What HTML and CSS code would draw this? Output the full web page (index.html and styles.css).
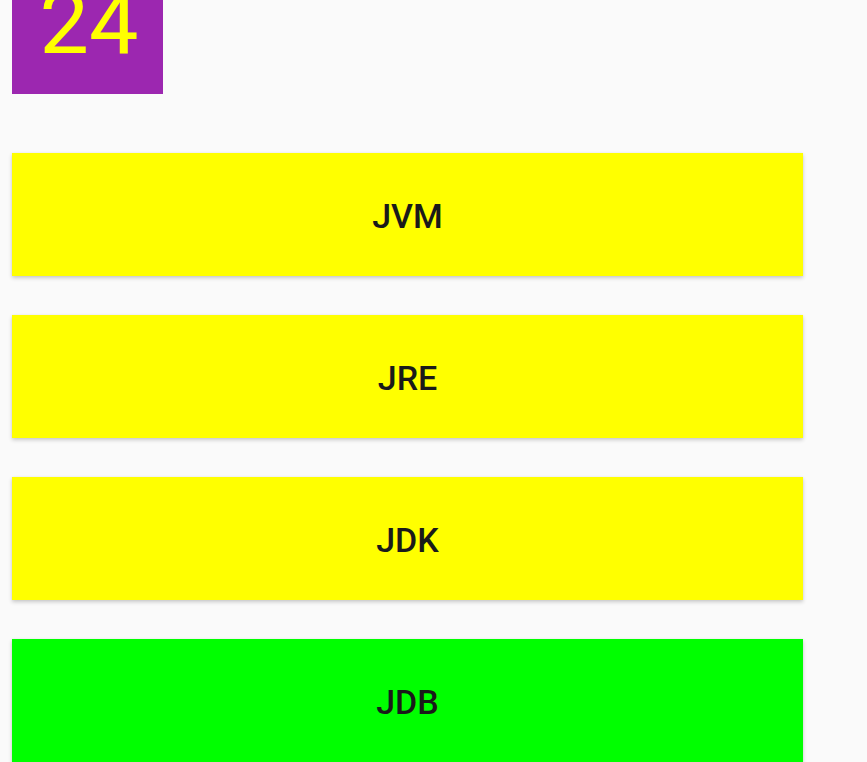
FILE: index.html
```html
<!DOCTYPE html>
<html>
<head>
<meta charset="utf-8">
<link rel="stylesheet" href="styles.css">
</head>
<body>
<div class="screen">
  <div class="counter"><span class="count">24</span></div>
  <div class="buttons">
    <div class="btn yellow">JVM</div>
    <div class="btn yellow">JRE</div>
    <div class="btn yellow">JDK</div>
    <div class="btn green">JDB</div>
  </div>
</div>
</body>
</html>
```

FILE: styles.css
```css
html, body {
  margin: 0;
  padding: 0;
  background: #fafafa;
  overflow: hidden;
}
.screen {
  padding-left: 12px;
  width: 791px;
  font-family: Roboto, "Liberation Sans", sans-serif;
}
.counter {
  margin-top: -29px;
  width: 151px;
  height: 123px;
  background: #9c27b0;
  display: flex;
  justify-content: center;
  align-items: flex-start;
}
.count {
  font-size: 88px;
  line-height: normal;
  color: #ffff00;
  padding-left: 3px;
}
.buttons {
  margin-top: 59px;
  display: flex;
  flex-direction: column;
  gap: 39px;
}
.btn {
  box-sizing: border-box;
  height: 123px;
  padding-top: 2px;
  display: flex;
  align-items: center;
  justify-content: center;
  font-size: 34px;
  font-weight: 500;
  color: #1a1a1a;
  box-shadow: 0 2px 4px rgba(0, 0, 0, 0.2), 0 0 1px rgba(0, 0, 0, 0.08);
}
.yellow { background: #ffff00; }
.green { background: #00ff00; }
```
